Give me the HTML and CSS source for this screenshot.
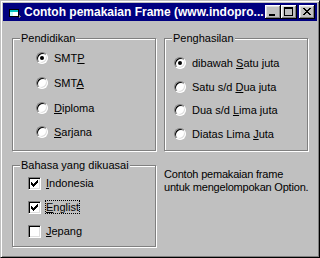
FILE: index.html
```html
<!DOCTYPE html>
<html lang="id">
<head>
  <meta charset="UTF-8" />
  <title>Contoh pemakaian Frame</title>
  <link rel="stylesheet" href="styles.css">
</head>
<body>

  <div class="window">
    <div class="titlebar">
      <svg class="appicon" width="16" height="16" viewBox="0 0 16 16" shape-rendering="crispEdges">
        <path d="M4 5h10v8h-10z" fill="#000"/>
        <path d="M5 6h8v6h-8z" fill="#fff"/>
        <path d="M5 6h8v2h-8z" fill="#00c0c0"/>
        <path d="M5 8h3v4h-3z" fill="#c0ffff"/>
        <path d="M14 11h1v1h1v1h-1v1h-1z" fill="#808080"/>
      </svg>
      <span class="title">Contoh pemakaian Frame (www.indopro...</span>
      <div class="capbtns">
        <button class="capbtn">
          <svg width="16" height="14" viewBox="0 0 16 14" shape-rendering="crispEdges"><path d="M4 9h6v2h-6z" fill="#000"/></svg>
        </button>
        <button class="capbtn">
          <svg width="16" height="14" viewBox="0 0 16 14" shape-rendering="crispEdges"><path d="M3 2h9v9h-9zM4 4v6h7v-6z" fill="#000" fill-rule="evenodd"/></svg>
        </button>
        <button class="capbtn close">
          <svg width="16" height="14" viewBox="0 0 16 14" shape-rendering="crispEdges"><path d="M4 3h2v1h-2zM10 3h2v1h-2zM5 4h2v1h-2zM9 4h2v1h-2zM6 5h4v1h-4zM7 6h2v1h-2zM6 7h4v1h-4zM5 8h2v1h-2zM9 8h2v1h-2zM4 9h2v1h-2zM10 9h2v1h-2z" fill="#000"/></svg>
        </button>
      </div>
    </div>

    <div class="client">
      <fieldset class="frame">
        <legend>Pendidikan</legend>
        <ul class="options pendidikan">
          <li><span class="radio checked"></span><span>SMT<u>P</u></span></li>
          <li><span class="radio"></span><span>SMT<u>A</u></span></li>
          <li><span class="radio"></span><span><u>D</u>iploma</span></li>
          <li><span class="radio"></span><span><u>S</u>arjana</span></li>
        </ul>
      </fieldset>

      <fieldset class="frame">
        <legend>Penghasilan</legend>
        <ul class="options penghasilan">
          <li><span class="radio checked"></span><span>dibawah <u>S</u>atu juta</span></li>
          <li><span class="radio"></span><span>Satu s/d <u>D</u>ua juta</span></li>
          <li><span class="radio"></span><span>Dua s/d <u>L</u>ima juta</span></li>
          <li><span class="radio"></span><span>Diatas Lima <u>J</u>uta</span></li>
        </ul>
      </fieldset>

      <fieldset class="frame bahasa">
        <legend>Bahasa yang dikuasai</legend>
        <ul class="options checks">
          <li><span class="check on"><svg width="7" height="7" viewBox="0 0 7 7" shape-rendering="crispEdges"><path d="M6 0h1v1h-1zM5 1h2v1h-2zM0 2h1v1h-1zM4 2h3v1h-3zM0 3h2v1h-2zM3 3h3v1h-3zM0 4h5v1h-5zM1 5h3v1h-3zM2 6h1v1h-1z" fill="#000"/></svg></span><span><u>I</u>ndonesia</span></li>
          <li><span class="check on"><svg width="7" height="7" viewBox="0 0 7 7" shape-rendering="crispEdges"><path d="M6 0h1v1h-1zM5 1h2v1h-2zM0 2h1v1h-1zM4 2h3v1h-3zM0 3h2v1h-2zM3 3h3v1h-3zM0 4h5v1h-5zM1 5h3v1h-3zM2 6h1v1h-1z" fill="#000"/></svg></span><span class="focus"><u>E</u>nglist</span></li>
          <li><span class="check"></span><span><u>J</u>epang</span></li>
        </ul>
      </fieldset>

      <p class="note">Contoh pemakaian frame<br>untuk mengelompokan Option.</p>
    </div>
  </div>

</body>
</html>
```

FILE: styles.css
```css
body {
  margin: 0;
  font-family: 'Liberation Sans', Arial, sans-serif;
  font-size: 11px;
  color: #000;
  background: #c0c0c0;
}
.window {
  width: 320px;
  height: 258px;
  box-sizing: border-box;
  padding: 2px;
  background: #c0c0c0;
  border: 1px solid;
  border-color: #c0c0c0 #000 #000 #c0c0c0;
  box-shadow: inset 1px 1px 0 #fff, inset -1px -1px 0 #808080;
}
.titlebar {
  height: 18px;
  background: #000080;
  display: flex;
  align-items: center;
  padding: 0 2px 0 2px;
  color: #fff;
}
.appicon {
  flex: none;
  margin-right: 3px;
}
.title {
  font-weight: bold;
  font-size: 12px;
  white-space: nowrap;
  flex: 1;
}
.capbtns {
  display: flex;
}
.capbtn {
  width: 16px;
  height: 14px;
  padding: 0;
  margin: 0;
  border: none;
  background: #c0c0c0;
  box-shadow: inset -1px -1px 0 #000, inset 1px 1px 0 #fff, inset -2px -2px 0 #808080, inset 2px 2px 0 #dfdfdf;
  display: block;
}
.capbtn svg {
  display: block;
}
.capbtn.close {
  margin-left: 2px;
}

.client {
  display: grid;
  grid-template-columns: 144px 144px;
  grid-template-rows: 119px auto;
  column-gap: 8px;
  row-gap: 8px;
  padding: 11px 0 0 9px;
}
.frame {
  margin: 0;
  padding: 0;
  min-width: 0;
  border: 1px solid #808080;
  box-shadow: 1px 1px 0 #fff, inset 1px 1px 0 #fff;
}
.frame legend {
  margin-left: 7px;
  padding: 0 1px;
  line-height: 13px;
  background: #c0c0c0;
}
.bahasa {
  height: 88px;
  box-sizing: border-box;
}
.options {
  list-style: none;
  margin: 0;
  padding: 0;
}
.options li {
  display: flex;
  align-items: center;
  height: 24px;
  white-space: nowrap;
}
.pendidikan {
  padding: 1px 0 0 23px;
}
.pendidikan li {
  height: 24.67px;
}
.penghasilan {
  padding: 6px 0 0 9px;
}
.penghasilan li {
  height: 23.7px;
}
.checks {
  margin-top: -1px;
  padding-left: 15px;
}
.radio {
  position: relative;
  flex: none;
  width: 12px;
  height: 12px;
  box-sizing: border-box;
  border-radius: 50%;
  border: 1px solid;
  border-color: #808080 #fff #fff #808080;
  background: #fff;
  box-shadow: inset 1px 1px 0 #000, inset -1px -1px 0 #dfdfdf;
  margin-right: 6px;
}
.radio.checked::after {
  content: "";
  position: absolute;
  left: 3px;
  top: 3px;
  width: 4px;
  height: 4px;
  border-radius: 50%;
  background: #000;
}
.check {
  flex: none;
  width: 13px;
  height: 13px;
  box-sizing: border-box;
  border: 1px solid;
  border-color: #808080 #fff #fff #808080;
  background: #fff;
  box-shadow: inset 1px 1px 0 #000, inset -1px -1px 0 #dfdfdf;
  margin-right: 5px;
  display: flex;
  align-items: flex-start;
  padding: 2px 0 0 2px;
}
.check svg {
  display: block;
}
.focus {
  outline: 1px dotted #000;
  outline-offset: 0;
}
.note {
  margin: 9px 0 0 0;
  line-height: 13px;
  white-space: nowrap;
  letter-spacing: -0.2px;
}
```
